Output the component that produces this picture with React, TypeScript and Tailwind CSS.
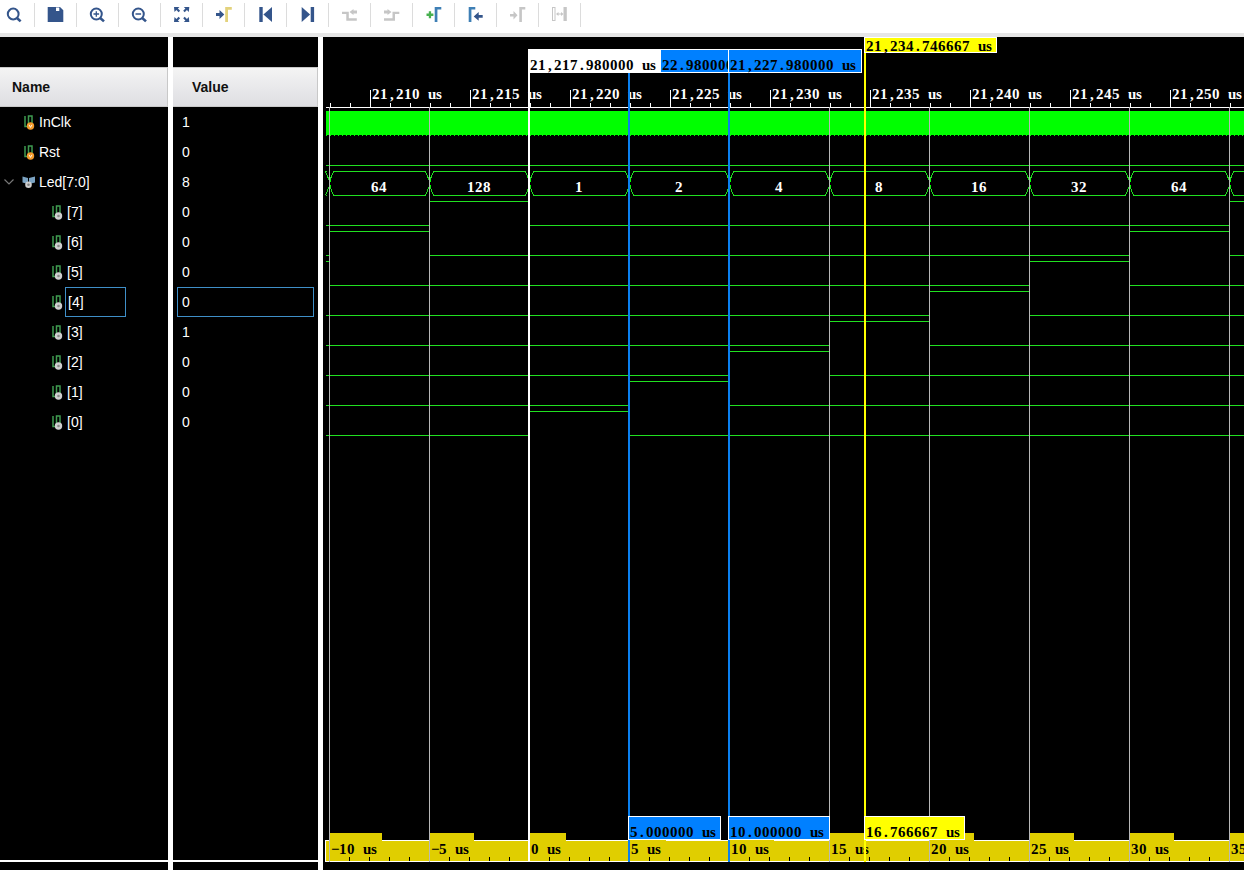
import React from "react";

const BLUE = "#34558b";
const GREY = "#c6c6c6";
const YEL = "#e3d27c";
const LINE = "#20e020";

function Toolbar() {
  const icons: React.ReactNode[] = [
    <g fill="none" stroke={BLUE} strokeWidth="2"><circle cx="13.200" cy="14" r="5.400" /><path d="M17 18l3.600 3.400" strokeWidth="2.600" /></g>,
    <path fillRule="evenodd" fill={BLUE} d="M47.700 7H60l3.300 3.200V22H47.700zM56 7.500v3.600h3.300V7.500z" />,
    <g fill="none" stroke={BLUE} strokeWidth="2"><circle cx="96.300" cy="14" r="5.500" /><path d="M100.200 18l3.800 3.400" strokeWidth="2.600" /><path d="M93.500 14h5.600M96.300 11.200v5.600" strokeWidth="1.300" /></g>,
    <g fill="none" stroke={BLUE} strokeWidth="2"><circle cx="138.300" cy="14" r="5.500" /><path d="M142.200 18l3.800 3.400" strokeWidth="2.600" /><path d="M135.500 14h5.600" strokeWidth="1.500" /></g>,
    <g fill={BLUE}>
      <path d="M174 7h5.500l-1.600 1.600 2.200 2.200-1.500 1.500-2.200-2.200-1.900 1.900z" />
      <path d="M189.300 7h-5.500l1.600 1.600-2.200 2.200 1.500 1.500 2.200-2.200 1.900 1.900z" />
      <path d="M174 22h5.500l-1.600-1.600 2.200-2.200-1.500-1.500-2.200 2.200-1.900-1.900z" />
      <path d="M189.300 22h-5.500l1.600-1.600-2.200-2.200 1.500-1.500 2.200 2.200 1.900-1.900z" />
    </g>,
    <g><path fill={BLUE} d="M216 13h3.500v-3l4.800 4.600-4.800 4.400v-3H216z" /><path fill={YEL} d="M225.200 7h6.600v2.800H228V22h-2.800z" /></g>,
    <g fill={BLUE}><rect x="259.300" y="7" width="3.400" height="15" /><path d="M272 7v15l-8.600-7.500z" /></g>,
    <g fill={BLUE}><rect x="310.700" y="7" width="3.400" height="15" /><path d="M301.700 7v15l8.400-7.500z" /></g>,
    <g fill={GREY}><path d="M342 11.700h6.800v6.600h8v2.400H346.300V14H342z" /><path d="M357 10.500h-3.500V9l-4 3 4 3v-1.500h3.500z" /></g>,
    <g fill={GREY}><path d="M399.300 11.700h-6.800v6.600H384v2.400h11V14h4.300z" /><path d="M384 10.500h3.500V9l4 3-4 3v-1.500H384z" /></g>,
    <g><path fill="#47b04f" d="M428.800 11.300h2.300v2.300h2.300v2.300h-2.300v2.300h-2.300v-2.300h-2.300v-2.300h2.300z" /><path fill="#3e7fb5" d="M434.700 7h6.600v2.600h-3.900V22h-2.700z" /></g>,
    <g><path fill="#3e7fb5" d="M468.700 7h6.600v2.600h-3.900V22h-2.700z" /><path fill={BLUE} d="M482.700 15h-4v-3l-5 4.400 5 4.400v-3h4z" /></g>,
    <g fill={GREY}><path d="M510 14h3.500v-3l4 4.300-4 4.200v-3H510z" /><path d="M519.300 7h6v2.500h-3.400V22h-2.600z" /></g>,
    <g><rect x="552.500" y="7.500" width="2.500" height="13" fill="none" stroke={GREY} /><rect x="563.500" y="7" width="3.300" height="14" fill={GREY} /><path fill={GREY} d="M556 14l2.500-2v1.500h2.500V12l2.500 2-2.500 2v-1.500h-2.500V16z" /></g>,
  ];
  return (
    <div className="h-[33px] bg-white flex items-start">
      {icons.map((ic, i) => {
        const left = i === 0 ? 0 : 35 + 42 * (i - 1);
        const w = i === 0 ? 34 : 41;
        return (
          <div key={i} className="mt-[3px] h-[24px] border-r border-[#dcdcdc] flex">
            <svg width={w} height={24} viewBox={`${left} 3 ${w} 24`} className="block">
              {ic}
            </svg>
          </div>
        );
      })}
    </div>
  );
}

function SignalIcon({ sub }: { sub?: boolean }) {
  return (
    <svg width="16" height="16" viewBox="0 0 16 16" className="shrink-0">
      <path d="M2 2v10.500h3.500V2H9v7" fill="none" stroke="#3f9a50" strokeWidth="1.500" />
      <circle cx="7.500" cy="12" r="3.700" fill={sub ? "#cfcfcf" : "#f39a2a"} />
      {sub ? <circle cx="7.500" cy="12" r="1.300" fill="#8a8a8a" /> : <path d="M6 10.800l1.500 2.600 1.500-2.600" fill="none" stroke="#fff" strokeWidth="0.900" />}
    </svg>
  );
}

function BusIcon() {
  return (
    <svg width="16" height="16" viewBox="0 0 16 16" className="shrink-0">
      <path d="M0.500 2.500l5.500 1.500v6L0.500 8.500zM13 2.500L7 4v6l6-1.500z" fill="#7ba3c2" />
      <circle cx="6.500" cy="10.700" r="3.300" fill="#cfcfcf" />
      <circle cx="6.500" cy="10.700" r="1.300" fill="#808080" />
    </svg>
  );
}

const rows = [
  { n: "InClk", v: "1", kind: "top" },
  { n: "Rst", v: "0", kind: "top" },
  { n: "Led[7:0]", v: "8", kind: "bus" },
  { n: "[7]", v: "0", kind: "sub" },
  { n: "[6]", v: "0", kind: "sub" },
  { n: "[5]", v: "0", kind: "sub" },
  { n: "[4]", v: "0", kind: "sub", sel: true },
  { n: "[3]", v: "1", kind: "sub" },
  { n: "[2]", v: "0", kind: "sub" },
  { n: "[1]", v: "0", kind: "sub" },
  { n: "[0]", v: "0", kind: "sub" },
];

function Header({ label, pad }: { label: string; pad: string }) {
  return (
    <div className={`h-[40px] mt-[30px] ${pad} flex items-center font-bold text-[14px] text-[#111] bg-gradient-to-b from-[#f4f4f4] to-[#dedee2] border-y border-r border-[#c8c8c8]`}>
      {label}
    </div>
  );
}

function NamePanel() {
  return (
    <div className="w-[168px] shrink-0 flex flex-col">
      <Header label="Name" pad="pl-[12px]" />
      <div className="flex-1">
        {rows.map((r) => (
          <div key={r.n} className={`h-[30px] flex items-center ${r.kind === "sub" ? "pl-[51px]" : r.kind === "bus" ? "pl-[3px]" : "pl-[23px]"}`}>
            {r.kind === "bus" && (
              <svg width="19" height="16" viewBox="0 0 19 16" className="shrink-0">
                <path d="M1.500 5.500l4.500 4.500 4.500-4.500" fill="none" stroke="#777" strokeWidth="1.200" />
              </svg>
            )}
            {r.kind === "bus" ? <BusIcon /> : <SignalIcon sub={r.kind === "sub"} />}
            {r.sel ? (
              <span className="-ml-[2px] pl-[2px] w-[61px] h-[30px] flex items-center border border-[#3f8fc8]">{r.n}</span>
            ) : (
              <span className={r.kind === "bus" ? "ml-[1px]" : ""}>{r.n}</span>
            )}
          </div>
        ))}
      </div>
      <div className="h-[2px] mb-[8px] bg-white" />
    </div>
  );
}

function ValuePanel() {
  return (
    <div className="w-[145px] shrink-0 flex flex-col">
      <Header label="Value" pad="pl-[19px]" />
      <div className="flex-1">
        {rows.map((r) => (
          <div key={r.n} className="h-[30px] flex items-center">
            {r.sel ? (
              <span className="ml-[4px] w-[137px] h-[30px] pl-[4px] flex items-center border border-[#3f8fc8]">{r.v}</span>
            ) : (
              <span className="pl-[9px]">{r.v}</span>
            )}
          </div>
        ))}
      </div>
      <div className="h-[2px] mb-[8px] bg-white" />
    </div>
  );
}

function T({ x, y, s, fill = "#000" }: { x: number; y: number; s: string; fill?: string }) {
  const narrow = ",.";
  const xs = s.split("").map((c, i) => x + i * 8 + (narrow.includes(c) ? 2 : 0)).join(" ");
  return (
    <text x={xs} y={y} fill={fill} className="font-['Liberation_Serif'] font-bold text-[15px]">
      {s}
    </text>
  );
}

const H = ({ a, b, y, c = LINE }: { a: number; b: number; y: number; c?: string }) => <rect x={a} y={y} width={b - a} height={1} fill={c} />;

function Wave() {
  const bounds = [329, 429, 529, 629, 729, 829, 929, 1029, 1129, 1229, 1329];
  const vals = [64, 128, 1, 2, 4, 8, 16, 32, 64, 128];
  const segs: { a: number; b: number; v: number }[] = [{ a: 326, b: 329, v: 32 }];
  vals.forEach((v, i) => segs.push({ a: bounds[i] + 1, b: bounds[i + 1], v }));
  const digital: React.ReactNode[] = [];
  for (let bit = 0; bit < 8; bit++) {
    const c = 212 + (7 - bit) * 30;
    segs.forEach((s, i) => {
      const hi = (s.v >> bit) & 1;
      digital.push(<H key={`${bit}-${i}`} a={s.a} b={s.b} y={hi ? c - 11 : c + 13} />);
    });
  }
  const bus: React.ReactNode[] = [];
  vals.forEach((v, i) => {
    const a = bounds[i];
    const b = bounds[i + 1];
    bus.push(<H key={`t${i}`} a={a + 4} b={b - 3} y={171} />, <H key={`b${i}`} a={a + 4} b={b - 3} y={195} />);
    bus.push(
      <path key={`x${i}`} d={`M${a - 3.5} 171.500L${a + 0.5} 181M${a + 4.5} 171.500L${a + 0.5} 181M${a - 3.5} 195.500L${a + 0.5} 185.500M${a + 4.5} 195.500L${a + 0.5} 185.500`} stroke={LINE} fill="none" />,
      <rect key={`d${i}`} x={a} y={180} width={2} height={2} fill="#00ff00" />,
      <rect key={`e${i}`} x={a} y={185} width={2} height={2} fill="#00ff00" />
    );
    if (i < 9) bus.push(<T key={`v${i}`} x={a + 50 - String(v).length * 4} y={192} s={String(v)} fill="#fff" />);
  });
  bus.push(<H key="bs0" a={326} b={327} y={171} />, <H key="bs1" a={326} b={327} y={195} />);

  const ticks: React.ReactNode[] = [];
  for (let x = 331; x < 1244; x += 20) {
    ticks.push(<rect key={x} x={x - 1} y={103} width={1} height={4} fill="#fff" />);
  }
  for (let k = 0; k < 9; k++) {
    const x = 370 + k * 100;
    ticks.push(<rect key={`m${k}`} x={x} y={90} width={1} height={17} fill="#fff" />);
    ticks.push(<T key={`l${k}`} x={x + 2} y={99} s={`21,${210 + k * 5} us`} fill="#fff" />);
  }

  const bottom: React.ReactNode[] = [];
  const raised = [[330, 382], [430, 474], [530, 566], [630, 666], [730, 774], [830, 866], [930, 974], [1030, 1074], [1130, 1174], [1230, 1244]];
  raised.forEach(([a, b]) => bottom.push(<rect key={`r${a}`} x={a} y={833} width={b - a} height={8} fill="#e0ce00" />));
  ["\u221210 us", "\u22125 us", "0 us", "5 us", "10 us", "15 us", "20 us", "25 us", "30 us", "35 us"].forEach((s, i) => {
    bottom.push(<T key={`bt${i}`} x={331 + i * 100} y={854} s={s} />);
  });
  for (let x = 349; x < 1244; x += 20) {
    bottom.push(<rect key={`bk${x}`} x={x} y={857} width={1} height={4} fill="#000" />);
  }

  const grays = [329, 429, 829, 929, 1029, 1129, 1229];

  return (
    <svg width="921" height="833" viewBox="323 37 921 833" className="block" shapeRendering="crispEdges">
      <defs>
        <clipPath id="cl"><rect x="661" y="50" width="67" height="22" /></clipPath>
      </defs>
      <H a={326} b={1244} y={107} c="#fff" />
      {ticks}
      <rect x="326" y="111" width="918" height="24" fill="#00ff00" />
      <path d="M326 135.500H1244" stroke="#00ff00" strokeDasharray="1 3" />
      <H a={326} b={1244} y={165} />
      {bus}
      {digital}

      <rect x="325" y="840" width="919" height="22" fill="#fff" />
      <rect x="326" y="841" width="918" height="20" fill="#e0ce00" />
      {bottom}

      {grays.map((x) => (
        <rect key={x} x={x} y={107} width={1} height={755} fill="#b8b8b8" />
      ))}
      <rect x="528" y="73" width="2" height="789" fill="#fff" />
      <rect x="628" y="73" width="2" height="789" fill="#0a80f0" />
      <rect x="728" y="73" width="2" height="789" fill="#0a80f0" />
      <rect x="864" y="53" width="2" height="809" fill="#ffff00" />

      <rect x="528" y="49" width="133" height="24" fill="#fff" />
      <T x={530} y={70} s="21,217.980000 us" />
      <rect x="661" y="49" width="201" height="24" fill="#fff" />
      <rect x="661" y="50" width="67" height="22" fill="#0080ff" />
      <g clipPath="url(#cl)"><T x={662} y={70} s="22.980000 us" /></g>
      <rect x="729" y="50" width="132" height="22" fill="#0080ff" />
      <T x={730} y={70} s="21,227.980000 us" />

      <rect x="864" y="37" width="133" height="16" fill="#fff" />
      <rect x="865" y="38" width="131" height="14" fill="#ffff00" />
      <T x={866} y={51} s="21,234.746667 us" />

      <rect x="628" y="816" width="93" height="24" fill="#fff" />
      <rect x="629" y="817" width="91" height="22" fill="#0080ff" />
      <T x={630} y={837} s="5.000000 us" />
      <rect x="728" y="816" width="102" height="24" fill="#fff" />
      <rect x="729" y="817" width="100" height="22" fill="#0080ff" />
      <T x={730} y={837} s="10.000000 us" />
      <rect x="864" y="816" width="101" height="24" fill="#fff" />
      <rect x="865" y="817" width="99" height="22" fill="#ffff00" />
      <T x={866} y={837} s="16.766667 us" />
    </svg>
  );
}

export default function App() {
  return (
    <div className="w-[1244px] h-[870px] overflow-hidden bg-black flex flex-col font-['Liberation_Sans',Arial,sans-serif] text-[14px] text-white">
      <Toolbar />
      <div className="h-[4px] bg-[#e6e6e6]" />
      <div className="flex-1 flex min-h-0">
        <NamePanel />
        <div className="w-[5px] shrink-0 bg-white" />
        <ValuePanel />
        <div className="w-[5px] shrink-0 bg-white" />
        <Wave />
      </div>
    </div>
  );
}
